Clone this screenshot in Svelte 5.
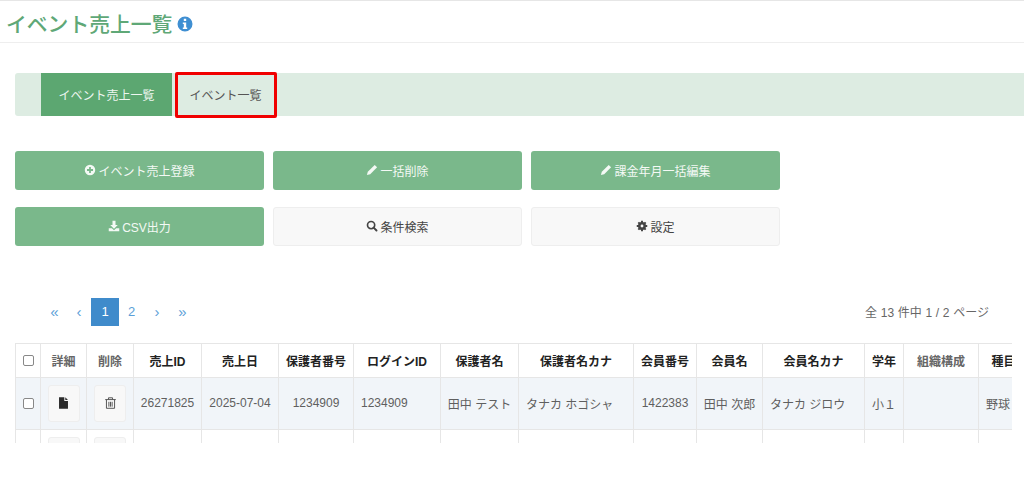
<script>
  const actionsTop = [
    { label: 'イベント売上登録', icon: 'plus' },
    { label: '一括削除', icon: 'pencil' },
    { label: '課金年月一括編集', icon: 'pencil' }
  ];

  const columns = [
    { label: '売上ID', width: 68 },
    { label: '売上日', width: 77 },
    { label: '保護者番号', width: 75 },
    { label: 'ログインID', width: 87, left: true },
    { label: '保護者名', width: 78 },
    { label: '保護者名カナ', width: 115, left: true },
    { label: '会員番号', width: 63 },
    { label: '会員名', width: 66 },
    { label: '会員名カナ', width: 102, left: true },
    { label: '学年', width: 39 },
    { label: '組織構成', width: 75, muted: true },
    { label: '種目', width: 50, left: true }
  ];

  const row = ['26271825', '2025-07-04', '1234909', '1234909', '田中 テスト', 'タナカ ホゴシャ', '1422383', '田中 次郎', 'タナカ ジロウ', '小１', '', '野球'];
</script>

{#snippet pencil()}
  <svg class="ico" viewBox="0 0 16 16"><path d="M11.6 1.2 14.8 4.4 5.6 13.6 1.2 14.8 2.4 10.4Z" fill="currentColor" /></svg>
{/snippet}

{#snippet plus()}
  <svg class="ico" viewBox="0 0 16 16"><path fill-rule="evenodd" d="M8 1a7 7 0 1 0 0 14A7 7 0 0 0 8 1ZM6.8 4h2.4v2.8H12v2.4H9.2V12H6.8V9.2H4V6.8h2.8Z" fill="currentColor" /></svg>
{/snippet}

<div class="page">
  <header class="title-bar">
    <h1>イベント売上一覧</h1>
    <svg class="info" viewBox="0 0 16 16"><path fill-rule="evenodd" d="M8 .5a7.5 7.5 0 1 0 0 15A7.5 7.5 0 0 0 8 .5ZM6.8 2.8h2.4v2.2H6.8ZM5.8 6.4h3.4v5h1v1.6H5.8v-1.6h1V8H5.8Z" fill="#3f8fd2" /></svg>
  </header>

  <nav class="tabs">
    <a class="tab active" href="#sales">イベント売上一覧</a>
    <a class="tab" href="#events">イベント一覧<span class="mark"></span></a>
  </nav>

  <div class="actions">
    {#each actionsTop as a}
      <button class="btn green">
        {#if a.icon === 'plus'}{@render plus()}{:else}{@render pencil()}{/if}{a.label}
      </button>
    {/each}
    <button class="btn green">
      <svg class="ico" viewBox="0 0 16 16"><path d="M6 1h4v5.5h3L8 11.5 3 6.5h3ZM1 11h4.1L8 13.8 10.9 11H15v4H1Z" fill="currentColor" /></svg>CSV出力
    </button>
    <button class="btn plain">
      <svg class="ico" viewBox="0 0 16 16"><circle cx="6.8" cy="6.8" r="4.8" fill="none" stroke="currentColor" stroke-width="2.2" /><path d="M10.2 10.2 14 14" stroke="currentColor" stroke-width="2.6" stroke-linecap="round" /></svg>条件検索
    </button>
    <button class="btn plain">
      <svg class="ico" viewBox="0 0 16 16"><circle cx="8" cy="8" r="3.9" fill="none" stroke="currentColor" stroke-width="2.8" /><path d="M8 1v14M1 8h14M3.1 3.1l9.8 9.8M12.9 3.1l-9.8 9.8" stroke="currentColor" stroke-width="2.6" /><circle cx="8" cy="8" r="1.9" fill="#f8f8f8" /></svg>設定
    </button>
  </div>

  <div class="pager-row">
    <ul class="pager">
      <li class="arrow first">«</li>
      <li class="arrow prev">‹</li>
      <li class="current">1</li>
      <li>2</li>
      <li class="arrow next">›</li>
      <li class="arrow">»</li>
    </ul>
    <span class="count">全 13 件中 1 / 2 ページ</span>
  </div>

  <div class="table-wrap">
    <table>
      <colgroup>
        <col style="width: 25px" />
        <col style="width: 46px" />
        <col style="width: 47px" />
        {#each columns as c}
          <col style="width: {c.width}px" />
        {/each}
      </colgroup>
      <thead>
        <tr>
          <th><input type="checkbox" /></th>
          <th class="muted">詳細</th>
          <th class="muted">削除</th>
          {#each columns as c}
            <th class:muted={c.muted}>{c.label}</th>
          {/each}
        </tr>
      </thead>
      <tbody>
        <tr class="filled">
          <td><input type="checkbox" /></td>
          <td>
            <span class="icon-btn">
              <svg viewBox="0 0 16 16" width="13" height="14"><path d="M2.5 1h6.5v4.5h4.5V15h-11ZM10.2 1l3.3 3.3h-3.3Z" fill="#2b2b2b" /></svg>
            </span>
          </td>
          <td>
            <span class="icon-btn">
              <svg viewBox="0 0 16 16" width="13" height="14"><path d="M1.5 3.8h13M5.5 3.5V1.6h5v1.9M3 4v10.5h10V4M6 6.5v6M8 6.5v6M10 6.5v6" fill="none" stroke="#444" stroke-width="1.1" /></svg>
            </span>
          </td>
          {#each row as v, i}
            <td class:left={columns[i].left}>{v}</td>
          {/each}
        </tr>
        <tr>
          <td></td>
          <td><span class="icon-btn"></span></td>
          <td><span class="icon-btn"></span></td>
          {#each row as _}
            <td></td>
          {/each}
        </tr>
      </tbody>
    </table>
  </div>
</div>

<style>
  :global(body) {
    background: #fff;
  }
  .page {
    height: 478px;
    overflow: hidden;
    font-family: "Liberation Sans", "Noto Sans CJK JP", sans-serif;
    font-size: 12px;
    color: #5f5f5f;
    border-top: 1px solid #e6e6e6;
    box-sizing: border-box;
  }
  .title-bar {
    display: flex;
    align-items: center;
    gap: 5px;
    height: 42px;
    padding: 2px 6px 0;
    box-sizing: border-box;
    border-bottom: 1px solid #eee;
  }
  h1 {
    margin: 0;
    font-size: 20.8px;
    font-weight: 500;
    color: #5fa877;
  }
  .info {
    width: 16px;
    height: 16px;
    margin-top: 2px;
  }
  .tabs {
    display: flex;
    height: 43px;
    margin: 30px 0 0 15px;
    padding-left: 26px;
    background: #ddece2;
    border-radius: 3px 0 0 3px;
  }
  .tab {
    position: relative;
    display: flex;
    align-items: center;
    justify-content: center;
    color: #555;
    text-decoration: none;
    width: 105px;
    padding-bottom: 1px;
    box-sizing: border-box;
  }
  .tab.active {
    width: 131px;
    margin-right: 1px;
    background: #5ca771;
    color: #eef6f0;
  }
  .mark {
    position: absolute;
    left: 2px;
    right: 1px;
    top: -1px;
    bottom: -2px;
    border: 3px solid #f00000;
    border-radius: 2px;
  }
  .actions {
    display: grid;
    grid-template-columns: repeat(3, 249px);
    grid-auto-rows: 39px;
    gap: 17px 9px;
    margin: 35px 0 0 15px;
  }
  .btn {
    display: flex;
    align-items: center;
    justify-content: center;
    gap: 2px;
    padding: 0 0 1px;
    font: inherit;
    border-radius: 3px;
    border: 1px solid transparent;
  }
  .btn.green {
    background: #7ab88b;
    color: #f4f9f5;
  }
  .btn.plain {
    background: #f8f8f8;
    border-color: #eee;
    color: #444;
  }
  .ico {
    width: 12px;
    height: 12px;
  }
  .pager-row {
    display: flex;
    justify-content: space-between;
    align-items: center;
    height: 28px;
    margin: 52px 35px 0 41px;
  }
  .pager {
    display: flex;
    align-items: center;
    margin: 0;
    padding: 0;
    list-style: none;
    color: #5c9fd8;
    font-size: 13px;
  }
  .pager li {
    width: 25px;
    height: 28px;
    line-height: 27px;
    text-align: center;
  }
  .pager li.arrow {
    font-size: 15px;
  }
  .pager li.first {
    margin-left: 1px;
  }
  .pager li.prev {
    width: 24px;
  }
  .pager li.next {
    width: 26px;
  }
  .pager .current {
    width: 28px;
    background: #3f8bcb;
    color: #fff;
  }
  .count {
    color: #666;
    word-spacing: 0.35px;
    margin-bottom: 1px;
  }
  .table-wrap {
    width: 997px;
    height: 100px;
    margin: 17px 0 0 15px;
    overflow: hidden;
  }
  table {
    table-layout: fixed;
    width: 1013px;
    border-collapse: collapse;
    border: 1px solid #e6e6e6;
  }
  th, td {
    padding: 0 0 1px;
    text-align: center;
    white-space: nowrap;
    border: 1px solid #e6e6e6;
    overflow: hidden;
  }
  th {
    height: 32px;
    font-weight: 700;
    color: #222;
  }
  th.muted {
    color: #666;
  }
  td {
    height: 50px;
  }
  td.left {
    text-align: left;
    padding-left: 7px;
  }
  .filled td {
    background: #f1f5f9;
  }
  input[type="checkbox"] {
    display: block;
    width: 11px;
    height: 11px;
    margin: 0 auto;
    appearance: none;
    background: #fff;
    border: 1px solid #888;
    border-radius: 2px;
  }
  .icon-btn {
    display: inline-flex;
    align-items: center;
    justify-content: center;
    width: 32px;
    height: 37px;
    vertical-align: middle;
    background: #f8f8f8;
    border: 1px solid #eee;
    border-radius: 3px;
    box-sizing: border-box;
  }
</style>
